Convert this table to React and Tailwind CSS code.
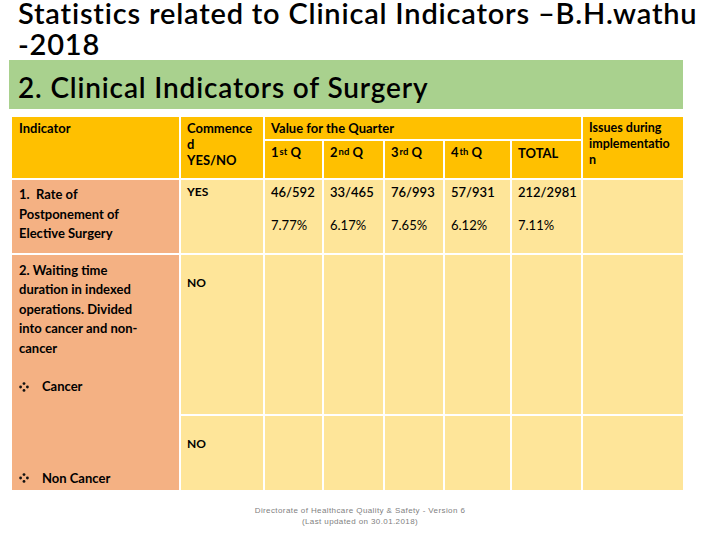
import React from "react";

function Sup({ base, sup }) {
  return (
    <span>
      {base}
      <sup className="text-[9.5px] relative top-[-2px] ml-[1px]">{sup}</sup> Q
    </span>
  );
}

function Bullet() {
  return (
    <svg width="10" height="10" viewBox="0 0 10 10" className="shrink-0">
      <circle cx="5" cy="1.6" r="1.4" fill="#111" />
      <circle cx="1.6" cy="5" r="1.4" fill="#111" />
      <circle cx="8.4" cy="5" r="1.4" fill="#111" />
      <circle cx="5" cy="8.4" r="1.4" fill="#111" />
    </svg>
  );
}

export default function App() {
  return (
    <div className="w-[720px] h-[540px] bg-white relative overflow-hidden font-['Lato',sans-serif] text-black">
      <div className="pl-[18px] mt-[-3px] text-[29px] leading-[31px] tracking-[0.8px] font-semibold whitespace-nowrap">
        <div>Statistics related to Clinical Indicators –B.H.wathu</div>
        <div>-2018</div>
      </div>
      <div className="ml-[9px] mt-[1px] w-[674px] h-[49px] bg-[#a9d18e] flex items-center pl-[9px] pt-[4px]">
        <span className="text-[28px] tracking-[0.85px] font-semibold">2. Clinical Indicators of Surgery</span>
      </div>
      <div
        className="ml-[12px] mt-[8px] w-[671px] grid gap-[2px] bg-white text-[13px]"
        style={{
          gridTemplateColumns: "167px 82px 57px 59px 58px 65px 69px 100px",
          gridTemplateRows: "22px 37px 73px 159px 74px",
        }}
      >
        {/* header */}
        <div className="bg-[#ffc000] row-span-2 col-start-1 row-start-1 px-[7px] pt-[3px] font-bold leading-[16px]">Indicator</div>
        <div className="bg-[#ffc000] row-span-2 col-start-2 row-start-1 px-[6px] pt-[3px] font-bold leading-[16px]">
          Commence<br />d<br />YES/NO
        </div>
        <div className="bg-[#ffc000] col-start-3 col-span-5 row-start-1 px-[6px] pt-[3px] font-bold leading-[16px]">Value for the Quarter</div>
        <div className="bg-[#ffc000] row-span-2 col-start-8 row-start-1 px-[6px] pt-[3px] font-bold leading-[16px] text-[12.5px]">
          Issues during<br />implementatio<br />n
        </div>
        <div className="bg-[#ffc000] col-start-3 row-start-2 px-[6px] pt-[3px] font-bold leading-[16px]"><Sup base="1" sup="st" /></div>
        <div className="bg-[#ffc000] col-start-4 row-start-2 px-[6px] pt-[3px] font-bold leading-[16px]"><Sup base="2" sup="nd" /></div>
        <div className="bg-[#ffc000] col-start-5 row-start-2 px-[6px] pt-[3px] font-bold leading-[16px]"><Sup base="3" sup="rd" /></div>
        <div className="bg-[#ffc000] col-start-6 row-start-2 px-[6px] pt-[3px] font-bold leading-[16px]"><Sup base="4" sup="th" /></div>
        <div className="bg-[#ffc000] col-start-7 row-start-2 px-[6px] pt-[4px] font-bold leading-[16px]">TOTAL</div>

        {/* row 1 */}
        <div className="bg-[#f4b183] col-start-1 row-start-3 px-[7px] pt-[5px] font-bold leading-[19.5px]">
          1.&nbsp; Rate of<br />Postponement of<br />Elective Surgery
        </div>
        <div className="bg-[#fee599] col-start-2 row-start-3 px-[6px] pt-[4px] font-bold text-[12px] leading-[16px]">YES</div>
        {[
          ["46/592", "7.77%"],
          ["33/465", "6.17%"],
          ["76/993", "7.65%"],
          ["57/931", "6.12%"],
          ["212/2981", "7.11%"],
        ].map(([a, b], i) => (
          <div key={i} className="bg-[#fee599] row-start-3 px-[6px] pt-[4px] leading-[16px] flex flex-col gap-[17px]">
            <span className="font-semibold">{a}</span>
            <span>{b}</span>
          </div>
        ))}
        <div className="bg-[#fee599] col-start-8 row-start-3"></div>

        {/* row 2/3 */}
        <div className="bg-[#f4b183] col-start-1 row-start-4 row-span-2 px-[7px] pt-[6px] font-bold leading-[19.4px] flex flex-col">
          <div>2. Waiting time<br />duration in indexed<br />operations. Divided<br />into cancer and non-<br />cancer</div>
          <div className="mt-[19px] flex items-center gap-[13px]"><Bullet /><span>Cancer</span></div>
          <div className="mt-auto mb-[2px] flex items-center gap-[13px]"><Bullet /><span>Non Cancer</span></div>
        </div>
        <div className="bg-[#fee599] col-start-2 row-start-4 px-[6px] pt-[20px] font-bold text-[12px] leading-[16px]">NO</div>
        {[3, 4, 5, 6, 7, 8].map((c) => (
          <div key={"a" + c} className="bg-[#fee599] row-start-4" style={{ gridColumnStart: c }}></div>
        ))}
        <div className="bg-[#fee599] col-start-2 row-start-5 px-[6px] pt-[20px] font-bold text-[12px] leading-[16px]">NO</div>
        {[3, 4, 5, 6, 7, 8].map((c) => (
          <div key={"b" + c} className="bg-[#fee599] row-start-5" style={{ gridColumnStart: c }}></div>
        ))}
      </div>
      <div className="absolute left-0 right-[0px] top-[505px] text-center text-[8px] leading-[11px] text-[#7f7f7f] font-['Liberation_Sans',sans-serif] tracking-[0.4px]">
        <div>Directorate of Healthcare Quality &amp; Safety - Version 6</div>
        <div>(Last updated on 30.01.2018)</div>
      </div>
    </div>
  );
}
